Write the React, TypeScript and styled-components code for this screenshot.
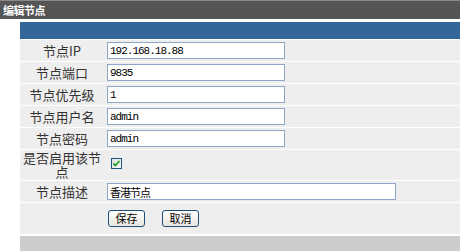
import styled, { createGlobalStyle } from 'styled-components'

const GlobalStyle = createGlobalStyle`
    html, body {
        margin: 0;
        padding: 0;
        background: #ffffff;
        font-family: 'Noto Sans CJK SC', 'DejaVu Sans', sans-serif;
    }
`

const Page = styled.div`
    width: 460px;
    height: 251px;
    overflow: hidden;
    display: flex;
    flex-direction: column;
`

const TitleBar = styled.div`
    height: 18px;
    border-top: 1px solid #8a8a8a;
    background-color: #555555;
    color: #ffffff;
    font-size: 11px;
    font-weight: bold;
    line-height: 18px;
    padding-left: 3px;
    letter-spacing: -0.5px;
`

const Panel = styled.div`
    margin: 3px 0 0 20px;
    display: flex;
    flex-direction: column;
    gap: 1px;
    flex: 1;
`

const Caption = styled.div`
    height: 17px;
    background-color: #336699;
`

const Row = styled.div<{ $tall?: number }>`
    display: grid;
    grid-template-columns: 84px 1fr;
    align-items: center;
    min-height: ${p => p.$tall || 21}px;
    background-color: #eeeeee;
`

const Label = styled.div`
    text-align: center;
    font-size: 13px;
    line-height: 14px;
    color: #333333;
    padding: 0 2px;
`

const Field = styled.div`
    padding-left: 3px;
    display: flex;
    align-items: center;
    gap: 17px;
`

const TextInput = styled.input<{ $wide?: boolean }>`
    box-sizing: border-box;
    width: ${p => (p.$wide ? 289 : 178)}px;
    height: 17px;
    margin: 0;
    padding: 0 2px;
    border: 1px solid #8ea6c6;
    background: #ffffff;
    font-family: 'Liberation Mono', 'Noto Sans CJK SC', monospace;
    font-size: 11px;
    letter-spacing: -1px;
    color: #000000;
    outline: none;
`

const Check = styled.span`
    display: inline-flex;
    align-items: center;
    justify-content: center;
    box-sizing: border-box;
    width: 11px;
    height: 11px;
    margin: 0 0 3px 4px;
    border: 1px solid #1c5180;
    background: linear-gradient(135deg, #dcdcd7, #ffffff);
`

const Button = styled.button`
    box-sizing: border-box;
    width: 37px;
    height: 17px;
    margin: 0 0 0 1px;
    padding: 0;
    border: 1px solid #1f4e79;
    border-radius: 3px;
    background: linear-gradient(#ffffff, #e6e6dc);
    font-family: 'Noto Sans CJK SC', sans-serif;
    font-size: 11px;
    line-height: 15px;
    color: #000000;
    & + & {
        margin-left: 0;
    }
`

const Footer = styled.div`
    flex: 1;
    margin-top: 1px;
    background-color: #cccccc;
`

const fields = [
    { label: '节点IP', value: '192.168.18.88' },
    { label: '节点端口', value: '9835' },
    { label: '节点优先级', value: '1' },
    { label: '节点用户名', value: 'admin' },
    { label: '节点密码', value: 'admin' },
]

export default function App() {
    return (
        <Page>
            <GlobalStyle />
            <TitleBar>编辑节点</TitleBar>
            <Panel>
                <Caption />
                {fields.map(f => (
                    <Row key={f.label}>
                        <Label>{f.label}</Label>
                        <Field>
                            <TextInput defaultValue={f.value} />
                        </Field>
                    </Row>
                ))}
                <Row $tall={30}>
                    <Label>是否启用该节点</Label>
                    <Field>
                        <Check>
                            <svg width="9" height="9" viewBox="0 0 9 9">
                                <path d="M1.5 4.5 L3.5 6.5 L7.5 2" stroke="#21a121" strokeWidth="1.8" fill="none" />
                            </svg>
                        </Check>
                    </Field>
                </Row>
                <Row>
                    <Label>节点描述</Label>
                    <Field>
                        <TextInput $wide defaultValue="香港节点" />
                    </Field>
                </Row>
                <Row $tall={31}>
                    <div />
                    <Field>
                        <Button>保存</Button>
                        <Button>取消</Button>
                    </Field>
                </Row>
                <Footer />
            </Panel>
        </Page>
    )
}
